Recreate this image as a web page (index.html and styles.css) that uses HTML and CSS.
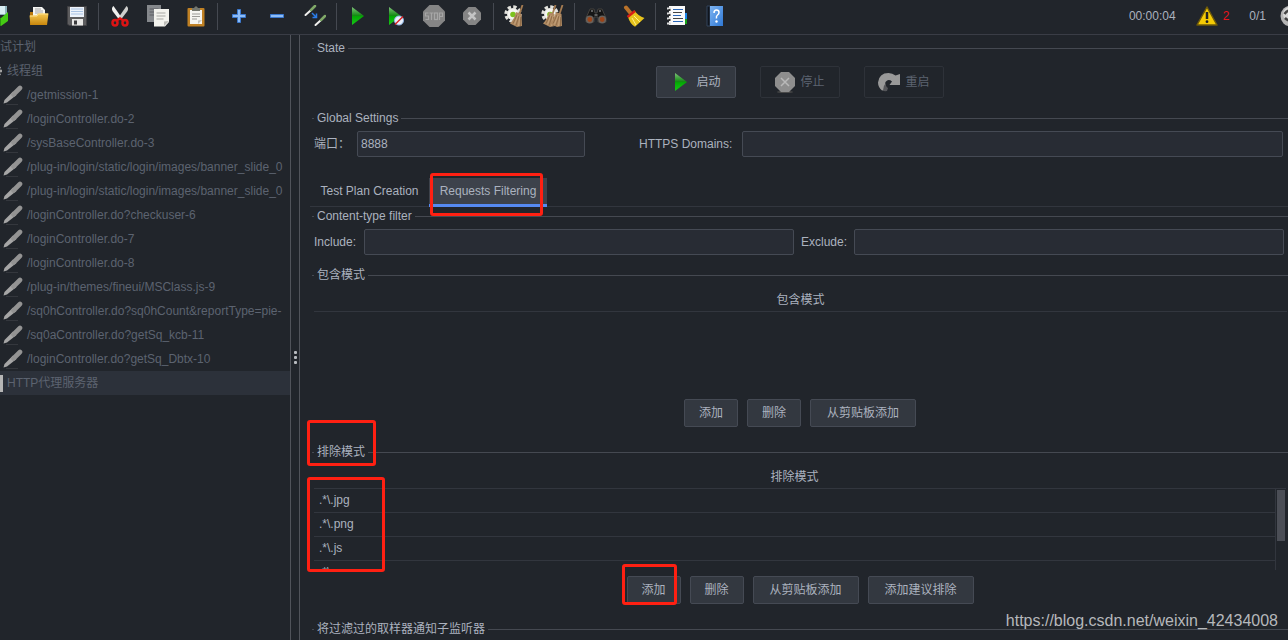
FILE: index.html
```html
<!DOCTYPE html>
<html lang="zh-CN">
<head>
<meta charset="utf-8">
<title>HTTP代理服务器</title>
<link rel="stylesheet" href="styles.css">
</head>
<body>
<svg class="defs" width="0" height="0" aria-hidden="true">
  <defs>
    <linearGradient id="g-green" x1="0" y1="0" x2="0" y2="1"><stop offset="0" stop-color="#7fc27a"/><stop offset=".48" stop-color="#138a13"/><stop offset=".52" stop-color="#03a803"/><stop offset="1" stop-color="#18c818"/></linearGradient>
    <linearGradient id="g-gold" x1="0" y1="0" x2="0" y2="1"><stop offset="0" stop-color="#f6ca55"/><stop offset="1" stop-color="#c8860c"/></linearGradient>
    <linearGradient id="g-blue" x1="0" y1="0" x2="1" y2="1"><stop offset="0" stop-color="#7db4f2"/><stop offset="1" stop-color="#2f78d4"/></linearGradient>
    <symbol id="pen" viewBox="0 0 20 20">
      <path d="M3 19.500h12" stroke="#34373d" stroke-width="1"/>
      <path d="M.500 18.500 1.500 15 10 6.500 13.500 10 4 17.500z" fill="#a6a6a6"/>
      <path d="M10.500 9.500 17 3" stroke="#939393" stroke-width="4.600" stroke-linecap="round"/>
    </symbol>
    <symbol id="play" viewBox="0 0 12 18"><path d="M0 0 12 9 0 18z" fill="url(#g-green)"/></symbol>
    <symbol id="gear" viewBox="0 0 22 22">
      <circle cx="9" cy="9" r="6" fill="#ecece8"/>
      <circle cx="9" cy="9" r="7" fill="none" stroke="#e2e2dd" stroke-width="3.400" stroke-dasharray="3.300 2.200"/>
      <circle cx="9" cy="9" r="5" fill="#f6f6f3"/>
      <circle cx="9" cy="9.500" r="2.800" fill="#7cc21e"/>
    </symbol>
    <symbol id="broom" viewBox="0 0 14 22">
      <path d="M12.500 0 9.500 9" stroke="#a67c52" stroke-width="1.800"/>
      <path d="M6 7 11.500 9 12 21 7 22 0 18.500Q4.500 14 6 7z" fill="#b08a62"/>
      <path d="M7 10 3 18.500M9 11 6 20.500M10.500 12v9" stroke="#8a6744" stroke-width=".8"/>
      <path d="M8 10 4.500 19.500M10 11 8.500 21" stroke="#d0b08a" stroke-width=".6"/>
    </symbol>
  </defs>
</svg>

<header class="toolbar">
  <div class="tools">
    <button class="tool" aria-label="新建"><svg width="20" height="24" viewBox="0 0 20 24"><path d="M8 2h8v9H8z" fill="#8fb3bd"/><path d="M9 2h5v8H9z" fill="#d8eef3"/><path d="M2 12 10 14v8L2 19z" fill="#2c9a10"/><path d="m10 14 7-6v9l-7 5z" fill="#45cc14"/></svg></button>
    <button class="tool" aria-label="打开"><svg width="20" height="20" viewBox="0 0 20 20"><path d="M1 6h6l2 2h9v11H1z" fill="#b9770b"/><path d="M4 1h9l3 3v9H4z" fill="#f5f5f3"/><path d="M6 3h6M6 5h8M6 7h8" stroke="#a5a5a5"/><path d="M.5 9.500h7L9 7.500h10.500L18 19H1.500z" fill="url(#g-gold)"/><path d="M1 10h7l1.500-2H19" stroke="#ffe08b" fill="none"/></svg></button>
    <button class="tool" aria-label="保存"><svg width="20" height="20" viewBox="0 0 20 20"><path d="M.5.500h19v19H2L.5 18z" fill="#5d5d5f" stroke="#3f3f42"/><path d="M3 1h14v10H3z" fill="#edf3fb"/><path d="M4 3h12M4 5.500h12M4 8h12" stroke="#a9c3e4"/><path d="M5 13h11v6.500H5z" fill="#e8e8e6"/><path d="M7 14.500h3v4H7z" fill="#3b3b3d"/></svg></button>
    <span class="sep"></span>
    <button class="tool" aria-label="剪切"><svg width="18" height="21" viewBox="0 0 18 21"><path d="M2.500 0Q0 2 1.500 5L8 13.500l2.500-2z" fill="#f0f0ee"/><path d="M15.500 0Q18 2 16.500 5L10 13.500l-2.500-2z" fill="#cfcfcd"/><g fill="none" stroke="#dc1414" stroke-width="2.500"><ellipse cx="4" cy="16.800" rx="2.500" ry="2.800"/><ellipse cx="14" cy="16.800" rx="2.500" ry="2.800"/><path d="m5.500 14.500 3.500-2 3.500 2"/></g></svg></button>
    <button class="tool" aria-label="复制"><svg width="22" height="22" viewBox="0 0 22 22"><path d="M0 0h14v17H0z" fill="#85888c"/><path d="M2.500 4h9M2.500 7h9M2.500 10h9" stroke="#5c5f64"/><path d="M7 4h15v13l-4 4.500H7z" fill="#f3f3ee"/><path d="M9.500 8h9M9.500 11h9M9.500 14h7" stroke="#a7a7a3"/><path d="m22 16-5 .5V21z" fill="#bcbcb7"/></svg></button>
    <button class="tool" aria-label="粘贴"><svg width="18" height="21" viewBox="0 0 18 21"><rect x=".5" y="2" width="17" height="18.500" rx="1" fill="#c08124"/><path d="M3 4h12v14H3z" fill="#f5f5f2"/><path d="M5 8h8M5 10.500h8M5 13h5" stroke="#9b9b98"/><path d="M5 2h2Q9-1.500 11 2h2v3H5z" fill="#74776f"/><path d="m15 14-4 .5V18z" fill="#c3c3be"/></svg></button>
    <span class="sep"></span>
    <button class="tool" aria-label="展开"><svg width="14" height="14" viewBox="0 0 14 14"><path d="M5.500.500h3v5h5v3h-5v5h-3v-5h-5v-3h5z" fill="#8dbcf5" stroke="#3a78cf"/></svg></button>
    <button class="tool" aria-label="折叠"><svg width="14" height="14" viewBox="0 0 14 14"><path d="M.5 5.500h13v3H.5z" fill="#8dbcf5" stroke="#3a78cf"/></svg></button>
    <button class="tool" aria-label="切换"><svg width="22" height="22" viewBox="0 0 22 22"><g stroke-linecap="round"><path d="m1.500 10 5-4.500M11.500 20l5-4.500" stroke="#f0f0ee" stroke-width="2"/><path d="m7 5 4-4M17 15l4-4" stroke="#7fa868" stroke-width="2.500"/></g><path d="m8 8 4 4M12.500 8.500V12.500H8.500" stroke="#2b7de9" stroke-width="1.500" fill="none"/></svg></button>
    <span class="sep"></span>
    <button class="tool" aria-label="启动"><svg width="12" height="18"><use href="#play"/></svg></button>
    <button class="tool" aria-label="不停顿开始"><svg width="16" height="20" viewBox="0 0 16 20"><path d="m1 1 12 9-12 9z" fill="url(#g-green)"/><circle cx="11" cy="14.500" r="4.500" fill="#e9f0fb" stroke="#8db4e6"/><path d="m7 18.500 8-8" stroke="#d82222" stroke-width="1.500"/></svg></button>
    <button class="tool" aria-label="停止" disabled><svg width="22" height="22" viewBox="0 0 22 22"><path d="M6.500 0h9L22 6.500v9L15.500 22h-9L0 15.500v-9z" fill="#858585"/><g fill="none" stroke="#a6a6a6" stroke-width="1.200"><path d="M5.500 8h-3v3h3v3.500h-3M6.500 8h4M8.500 8v7"/><rect x="11.500" y="8" width="3" height="6.500"/><path d="M16.500 15V8h3v3.500h-3"/></g></svg></button>
    <button class="tool" aria-label="关闭" disabled><svg width="18" height="18" viewBox="0 0 18 18"><path d="M5.500 0h7L18 5.500v7L12.500 18h-7L0 12.500v-7z" fill="#858585"/><path d="m5.500 5.500 7 7m0-7-7 7" stroke="#c4c4c4" stroke-width="2.500"/></svg></button>
    <span class="sep"></span>
    <button class="tool" aria-label="清除"><svg width="22" height="22" viewBox="0 0 22 22"><use href="#gear" width="22" height="22"/><use href="#broom" x="6" width="14" height="22"/></svg></button>
    <button class="tool" aria-label="清除全部"><svg width="24" height="22" viewBox="0 0 24 22"><use href="#gear" width="22" height="22"/><use href="#broom" x="2" width="14" height="22"/><use href="#broom" x="9" width="14" height="22"/></svg></button>
    <span class="sep"></span>
    <button class="tool" aria-label="查找"><svg width="22" height="16" viewBox="0 0 22 16"><path d="M5 1h4l1 4h2l1-4h4l4 9v4h-8V9h-4v5H1v-4z" fill="#151515" stroke="#45423e"/><circle cx="4.800" cy="11.500" r="3.200" fill="#9c4418" stroke="#67625d" stroke-width="1.500"/><circle cx="17.200" cy="11.500" r="3.200" fill="#9c4418" stroke="#67625d" stroke-width="1.500"/><path d="M6 3h2m6 0h2M9.500 7h3" stroke="#aaa"/></svg></button>
    <button class="tool" aria-label="重置查找"><svg width="22" height="22" viewBox="0 0 22 22"><path d="M3 2.500 7.500 8" stroke="#b9722a" stroke-width="4" stroke-linecap="round"/><path d="m5 12 6.500-6.500Q15 11 21.500 13L12 21.800Q7 19 5 12z" fill="#e6c31c"/><path d="m9 13 4 7m-2-9 6 6" stroke="#fff08a"/><path d="m4.500 12 7.500-6" stroke="#d61e16" stroke-width="2.500"/></svg></button>
    <span class="sep"></span>
    <button class="tool" aria-label="函数助手"><svg width="22" height="20" viewBox="0 0 22 20"><path d="M18 7h3v6h-3z" fill="#1d86e8"/><path d="M18 13h3v5h-3z" fill="#18a018"/><path d="M3 0h16v19H3z" fill="#fafafa"/><path d="M1 2.500h4M1 7.500h4M1 12.500h4M1 17.500h4" stroke="#ddd" stroke-width="2"/><path d="M3.500 3v2m0 3v2m0 3v2" stroke="#333" stroke-width="2"/><path d="M7 3.500h10M7 9.500h8M7 15.500h10" stroke="#2b67b8"/><path d="M7 6.500h9M7 12.500h10" stroke="#444"/></svg></button>
    <button class="tool" aria-label="帮助"><svg width="18" height="22" viewBox="0 0 18 22"><path d="M1 1h3v20H1z" fill="#10151d" stroke="#33445c"/><path d="M4 1h13v20H4z" fill="url(#g-blue)"/><path d="M8 8q0-3 2.500-3T13 7.500q0 1.500-1.500 2.500T10.500 13.500" fill="none" stroke="#fff" stroke-width="1.500"/><circle cx="10.500" cy="16.500" r="1.200" fill="#fff"/></svg></button>
  </div>
  <div class="status">
    <span class="time">00:00:04</span>
    <svg width="22" height="20" viewBox="0 0 22 20"><path d="M11 1 21 19H1z" fill="#f5cb05" stroke="#6e5a0a" stroke-width="1.500" stroke-linejoin="round"/><path d="M11 6v7" stroke="#222" stroke-width="2.500"/><circle cx="11" cy="15.700" r="1.400" fill="#222"/></svg>
    <span class="errors">2</span>
    <span class="threads">0/1</span>
    <svg class="remote" width="22" height="22" viewBox="0 0 22 22"><circle cx="11" cy="11" r="10.500" fill="#b4b4b4"/><circle cx="10" cy="9" r="7" fill="#d8d8d8"/><path d="M4.500 9q4-6 9-2M5 13q4 4 8 2" stroke="#444" stroke-width="2.500" fill="none"/></svg>
  </div>
</header>

<div class="split">
  <nav class="tree">
    <ul>
      <li class="root"><span>试计划</span></li>
      <li class="group"><svg width="14" height="14" viewBox="0 0 14 14"><circle cx="7" cy="7" r="4.500" fill="#a3a3a3"/><path d="M7 1v12M1 7h12M2.800 2.800l8.400 8.400M11.200 2.800l-8.400 8.400" stroke="#a3a3a3" stroke-width="2.500"/></svg><span>线程组</span></li>
      <li><svg width="20" height="20"><use href="#pen"/></svg><span>/getmission-1</span></li>
      <li><svg width="20" height="20"><use href="#pen"/></svg><span>/loginController.do-2</span></li>
      <li><svg width="20" height="20"><use href="#pen"/></svg><span>/sysBaseController.do-3</span></li>
      <li><svg width="20" height="20"><use href="#pen"/></svg><span>/plug-in/login/static/login/images/banner_slide_0</span></li>
      <li><svg width="20" height="20"><use href="#pen"/></svg><span>/plug-in/login/static/login/images/banner_slide_0</span></li>
      <li><svg width="20" height="20"><use href="#pen"/></svg><span>/loginController.do?checkuser-6</span></li>
      <li><svg width="20" height="20"><use href="#pen"/></svg><span>/loginController.do-7</span></li>
      <li><svg width="20" height="20"><use href="#pen"/></svg><span>/loginController.do-8</span></li>
      <li><svg width="20" height="20"><use href="#pen"/></svg><span>/plug-in/themes/fineui/MSClass.js-9</span></li>
      <li><svg width="20" height="20"><use href="#pen"/></svg><span>/sq0hController.do?sq0hCount&amp;reportType=pie-</span></li>
      <li><svg width="20" height="20"><use href="#pen"/></svg><span>/sq0aController.do?getSq_kcb-11</span></li>
      <li><svg width="20" height="20"><use href="#pen"/></svg><span>/loginController.do?getSq_Dbtx-10</span></li>
      <li class="proxy selected"><i class="server"></i><span>HTTP代理服务器</span></li>
    </ul>
  </nav>
  <div class="divider"><i></i><i></i><i></i></div>

  <main class="panel">
    <section class="state">
      <h2 class="legend"><span>State</span></h2>
      <div class="buttons state-buttons">
        <button class="btn big"><svg class="start-icon" width="12" height="18"><use href="#play"/></svg>启动</button>
        <button class="btn big" disabled><svg width="20" height="21" viewBox="0 0 20 21"><ellipse cx="10" cy="20" rx="8" ry="1" fill="#4a4a4a"/><path d="M6 0h8l6 6v8l-6 6H6l-6-6V6z" fill="#8e8e8e"/><path d="m6 6 8 8m0-8-8 8" stroke="#b9b9b9" stroke-width="1.500"/></svg>停止</button>
        <button class="btn big" disabled><svg width="22" height="19" viewBox="0 0 22 19"><path d="M4 17.500Q0 14 0 9.500 1 0 10.500 0q4 0 7 2.500L22 1v11H11.500l2.500-3.500Q11 6 8.500 8T8 13l-1 4z" fill="#999"/><path d="M5 17.500Q6 18.500 9 18l1-3Q7 13 8 9.500 5 13 5 17.500z" fill="#55565a"/></svg>重启</button>
      </div>
    </section>

    <section>
      <h2 class="legend"><span>Global Settings</span></h2>
      <div class="fields global">
        <label class="l-port" for="port">端口：</label>
        <input class="port" id="port" type="text" value="8888">
        <label class="l-domains" for="domains">HTTPS Domains:</label>
        <input id="domains" type="text">
      </div>
    </section>

    <div class="tabs" role="tablist">
      <button class="tab" role="tab" aria-selected="false">Test Plan Creation</button>
      <button class="tab active" role="tab" aria-selected="true">Requests Filtering<i class="mark mark-tab"></i></button>
    </div>

    <section>
      <h2 class="legend"><span>Content-type filter</span></h2>
      <div class="fields types">
        <label class="l-include" for="include">Include:</label>
        <input id="include" type="text">
        <label class="l-exclude" for="exclude">Exclude:</label>
        <input id="exclude" type="text">
      </div>
    </section>

    <section class="patterns">
      <h2 class="legend"><span>包含模式</span></h2>
      <div class="grid">
        <table><thead><tr><th>包含模式</th></tr></thead></table>
      </div>
      <div class="buttons">
        <button class="btn">添加</button>
        <button class="btn">删除</button>
        <button class="btn wide">从剪贴板添加</button>
      </div>
    </section>

    <section class="patterns">
      <h2 class="legend"><span>排除模式</span><i class="mark mark-legend"></i></h2>
      <div class="marked">
        <div class="grid scrolling">
          <table>
            <thead><tr><th>排除模式</th></tr></thead>
            <tbody>
              <tr><td>.*\.jpg</td></tr>
              <tr><td>.*\.png</td></tr>
              <tr><td>.*\.js</td></tr>
              <tr><td>.*\</td></tr>
            </tbody>
          </table>
          <div class="scrollbar"><i></i></div>
        </div>
        <i class="mark mark-rows"></i>
      </div>
      <div class="buttons">
        <button class="btn">添加<i class="mark mark-add"></i></button>
        <button class="btn">删除</button>
        <button class="btn wide">从剪贴板添加</button>
        <button class="btn wide">添加建议排除</button>
      </div>
    </section>

    <section>
      <h2 class="legend"><span>将过滤过的取样器通知子监听器</span></h2>
    </section>
  </main>
</div>
<div class="watermark">https://blog.csdn.net/weixin_42434008</div>
</body>
</html>
```

FILE: styles.css
```css
:root {
  --bg: #21252b;
  --field: #282c34;
  --line: #32363e;
  --border: #454951;
  --text: #abb2bf;
  --dim: #5c6370;
  --red: #ff2012;
}

* { box-sizing: border-box; }

body {
  margin: 0;
  height: 100vh;
  display: flex;
  flex-direction: column;
  overflow: hidden;
  background: var(--bg);
  color: var(--text);
  font: 12px/16px "Liberation Sans", Arial, "Noto Sans CJK SC", sans-serif;
}

button, input { font: inherit; color: inherit; margin: 0; }
.defs { position: absolute; }

/* Toolbar */
.toolbar {
  flex: none;
  display: flex;
  justify-content: space-between;
  height: 35px;
  padding-bottom: 2px;
  border-bottom: 1px solid #3a3d46;
  overflow: hidden;
}
.tools { display: flex; align-items: center; margin-left: -18px; }
.tool {
  width: 38px;
  height: 32px;
  padding: 0;
  border: 0;
  background: none;
  display: flex;
  align-items: center;
  justify-content: center;
}
.sep { width: 5px; height: 27px; padding: 0 2px; background: #454951 content-box; }
.status { display: flex; align-items: center; margin-right: -14px; }
.time { margin-right: 20px; }
.errors { margin: 0 20px 0 5px; color: #e8141c; }
.threads { margin-right: 14px; }

/* Tree */
.split { flex: 1; min-height: 0; display: flex; }
.tree { flex: 0 0 291px; overflow: hidden; border-right: 1px solid #50535a; }
.tree ul { list-style: none; margin: 0; padding: 0; }
.tree li {
  display: flex;
  align-items: center;
  gap: 4px;
  height: 24px;
  padding-left: 3px;
  color: var(--dim);
  white-space: nowrap;
}
.tree svg { flex: none; }
.tree .root { padding-left: 0; }
.tree .group { margin-left: -14px; }
.tree .proxy { padding-left: 0; }
.tree .selected { background: #2c313a; }
.server { width: 3px; height: 17px; background: #b5b5b5; }

.divider {
  flex: 0 0 9px;
  display: flex;
  flex-direction: column;
  align-items: center;
  justify-content: center;
  gap: 2px;
  padding-top: 40px;
  border-right: 1px solid #50535a;
}
.divider i { width: 3px; height: 3px; border-radius: 1px; background: #b8bbc0; }

/* Settings panel */
.panel { flex: 1; min-width: 0; padding: 5px 0 0 12px; }
.legend {
  position: relative;
  display: flex;
  align-items: center;
  gap: 3px;
  height: 16px;
  margin: 0;
  font-size: 12px;
  font-weight: normal;
  white-space: nowrap;
}
.legend::before { content: ""; width: 2px; height: 1px; background: var(--border); }
.legend::after { content: ""; flex: 1; height: 1px; background: var(--border); }

.buttons { display: flex; justify-content: center; gap: 9px; }
.btn {
  position: relative;
  width: 54px;
  height: 28px;
  padding: 0;
  border: 1px solid #454a54;
  border-radius: 2px;
  background: #333840;
}
.btn.wide { width: 106px; }
.btn.big {
  display: flex;
  align-items: center;
  justify-content: center;
  gap: 5px;
  width: 80px;
  height: 32px;
}
.start-icon { margin: 0 4px; }
.btn:disabled { color: var(--dim); background: none; border-color: #2e3239; }
.state-buttons { gap: 24px; padding: 10px 0 12px; }

.fields { display: flex; align-items: center; padding: 5px 5px 0 2px; }
.fields label { flex: none; white-space: nowrap; }
.fields input {
  flex: 1;
  min-width: 0;
  height: 26px;
  padding: 0 3px;
  border: 1px solid #454a54;
  border-radius: 2px;
  background: var(--field);
}
.fields .port { flex: 0 1 228px; margin-right: 54px; }
.l-port { width: 43px; }
.l-domains { width: 103px; }
.types { padding-right: 4px; padding-bottom: 12px; }
.l-include { width: 50px; }
.l-exclude { width: 60px; padding-left: 7px; }

.tabs {
  display: flex;
  height: 29px;
  margin: 21px 0 1px -2px;
  border-bottom: 1px solid var(--line);
}
.tab {
  position: relative;
  width: 119px;
  height: 29px;
  padding: 0;
  border: 0;
  border-bottom: 3px solid transparent;
  background: none;
}
.tab.active { width: 118px; background: #3d424b; border-bottom-color: #568af2; }

/* Pattern tables */
.grid { display: flex; height: 105px; margin: 5px 1px 0 2px; overflow: hidden; }
.grid table { flex: 1; align-self: flex-start; border-spacing: 0; }
.grid th, .grid td { height: 24px; padding: 0 5px; border-bottom: 1px solid var(--line); }
.grid th { font-weight: normal; text-align: center; }
.grid td { padding-bottom: 2px; text-align: left; }
.scrolling { margin-right: 2px; }
.scrollbar {
  flex: 0 0 11px;
  margin-top: 23px;
  padding: 1px 1px 0;
  border-top: 1px solid var(--line);
  border-left: 1px solid var(--line);
}
.scrollbar i { display: block; height: 51px; background: #4b4e56; }
.patterns .buttons { padding: 6px 0 17px; }
.marked { position: relative; }

/* Highlight frames drawn over the panel */
.mark {
  position: absolute;
  border: 3px solid var(--red);
  border-radius: 3px;
  pointer-events: none;
}
.mark-tab { left: 1px; right: 4px; top: -5px; bottom: -12px; }
.mark-legend { left: -5px; top: -24px; width: 69px; height: 46px; }
.mark-rows { left: -5px; top: 12px; width: 78px; height: 95px; }
.mark-add { left: -6px; right: 3px; top: -13px; bottom: -2px; }

.watermark {
  position: absolute;
  right: 10px;
  bottom: 9px;
  color: #b6b8bb;
  font-size: 16px;
  line-height: 20px;
}
```
